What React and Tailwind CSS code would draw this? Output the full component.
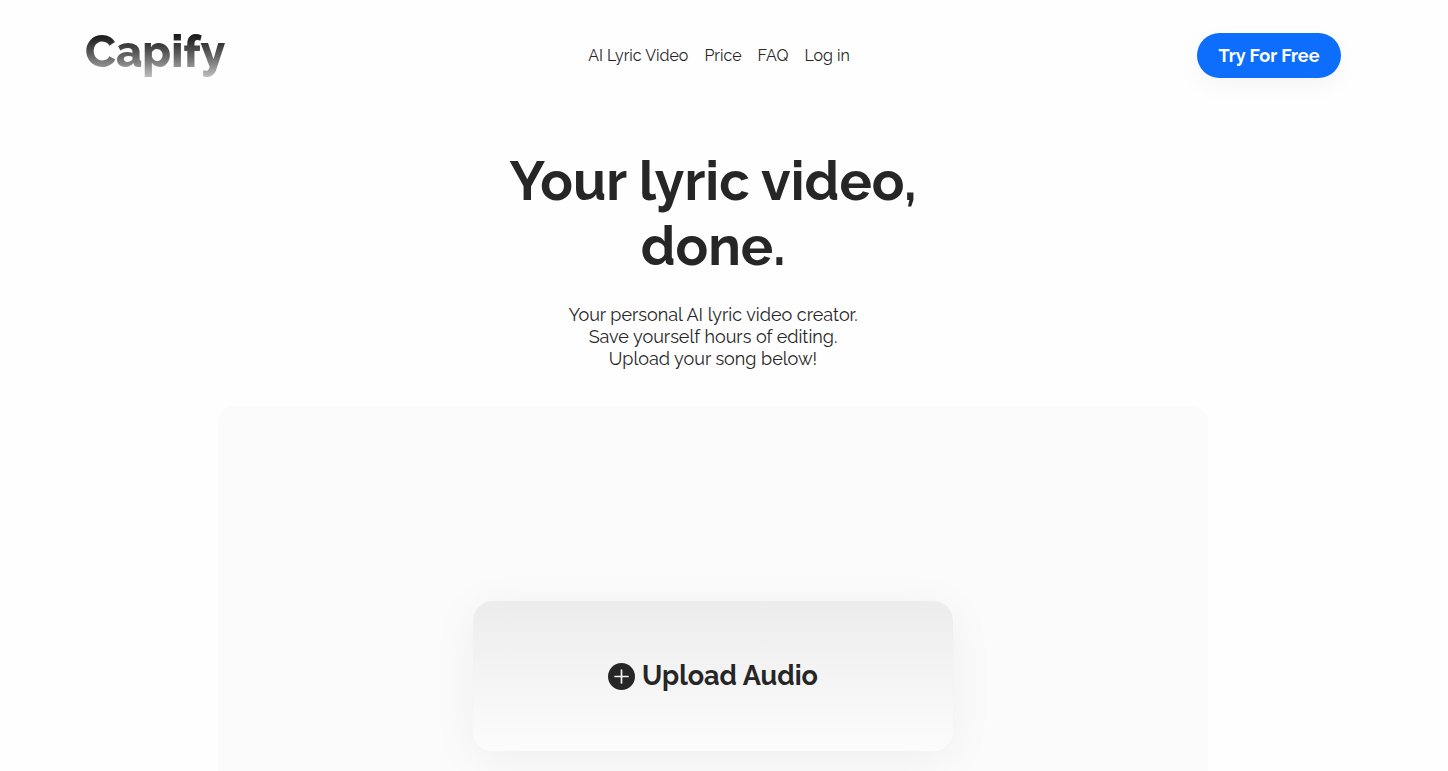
/**
 * App.jsx — Capify landing page
 */

const NAV_LINKS = [
  { label: 'AI Lyric Video', href: '#lyric-video' },
  { label: 'Price', href: '#price' },
  { label: 'FAQ', href: '#faq' },
  { label: 'Log in', href: '#login' },
]

function PlusCircle() {
  return (
    <svg viewBox="0 0 27 27" className="size-[27px] shrink-0" aria-hidden="true">
      <circle cx="13.5" cy="13.5" r="13.5" fill="#262626" />
      <path d="M13.5 7v13M7 13.5h13" stroke="#f3f3f3" strokeWidth="1.7" strokeLinecap="round" />
    </svg>
  )
}

function Header() {
  return (
    <header className="flex items-start justify-between px-[85px] pt-[33px]">
      <a
        href="#home"
        className="-mt-2 w-[156px] bg-linear-to-b from-[#0a0a0a] from-10% to-[#b8b8b8] to-95% bg-clip-text text-[45px] leading-[53px] font-extrabold text-transparent"
      >
        Capify
      </a>

      <nav className="flex gap-4 pt-3 text-[16px] leading-[22px]">
        {NAV_LINKS.map(link => (
          <a key={link.label} href={link.href} className="whitespace-nowrap">
            {link.label}
          </a>
        ))}
      </nav>

      <button
        type="button"
        className="h-[45px] w-36 cursor-pointer rounded-full bg-[#0d6efd] text-[18px] font-bold whitespace-nowrap text-white shadow-[0_8px_24px_rgba(0,0,0,0.04)]"
      >
        Try For Free
      </button>
    </header>
  )
}

function Hero() {
  return (
    <section className="flex flex-col items-center pt-[71px] text-center">
      <h1 className="text-[54px] leading-[65px] font-bold">
        Your lyric video,
        <br />
        done.
      </h1>
      <p className="pt-[25px] text-[18px] leading-[22px]">
        Your personal AI lyric video creator.
        <br />
        Save yourself hours of editing.
        <br />
        Upload your song below!
      </p>
    </section>
  )
}

function UploadPanel() {
  return (
    <section className="mx-auto mt-[36px] flex w-full max-w-[990px] justify-center rounded-2xl bg-[#fbfbfb] py-[195px]">
      <button
        type="button"
        className="flex h-[150px] w-[480px] cursor-pointer items-center justify-center gap-[7px] rounded-[20px] bg-linear-to-b from-[#ececec] to-[#fcfcfc] text-[27px] font-bold shadow-[0_8px_48px_rgba(0,0,0,0.05)]"
      >
        <PlusCircle />
        Upload Audio
      </button>
    </section>
  )
}

export default function App() {
  return (
    <div className="min-h-screen bg-[#fefefe] pr-[22px] font-[Raleway,Lato,sans-serif] text-[#262626]">
      <Header />
      <main>
        <Hero />
        <UploadPanel />
      </main>
    </div>
  )
}
